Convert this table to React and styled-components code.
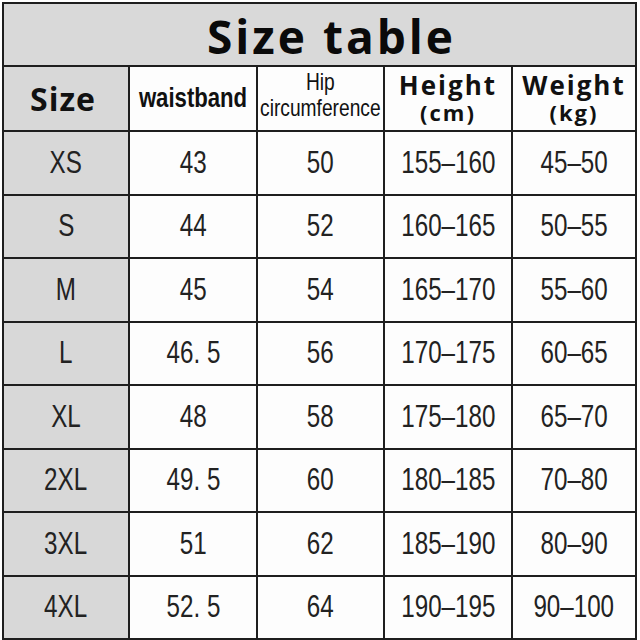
import React from "react";
import styled, { createGlobalStyle } from "styled-components";

const GlobalStyle = createGlobalStyle`
  body {
    margin: 0;
    background: #ffffff;
    font-family: "Liberation Sans", Arial, sans-serif;
  }
`;

const rows = [
  ["XS", "43", "50", "155-160", "45-50"],
  ["S", "44", "52", "160-165", "50-55"],
  ["M", "45", "54", "165-170", "55-60"],
  ["L", "46. 5", "56", "170-175", "60-65"],
  ["XL", "48", "58", "175-180", "65-70"],
  ["2XL", "49. 5", "60", "180-185", "70-80"],
  ["3XL", "51", "62", "185-190", "80-90"],
  ["4XL", "52. 5", "64", "190-195", "90-100"],
];

function App() {
  return (
    <Page>
      <GlobalStyle />
      <Table>
        <Title>Size table</Title>
        <Cell $gray>
          <BigHead>Size</BigHead>
        </Cell>
        <Cell>
          <NarrowHead>waistband</NarrowHead>
        </Cell>
        <Cell>
          <HipHead>
            <span>Hip</span>
            <span>circumference</span>
          </HipHead>
        </Cell>
        <Cell>
          <WideHead>
            <span>Height</span>
            <small>(cm)</small>
          </WideHead>
        </Cell>
        <Cell>
          <WideHead>
            <span>Weight</span>
            <small>(kg)</small>
          </WideHead>
        </Cell>
        {rows.map((row) =>
          row.map((value, i) => (
            <Cell key={row[0] + i} $gray={i === 0}>
              <Value>{value.replace("-", "\u2013")}</Value>
            </Cell>
          ))
        )}
      </Table>
    </Page>
  );
}

const Page = styled.div`
  width: 640px;
  height: 640px;
  padding: 2px 3px 0 2px;
  box-sizing: border-box;
  background: #fff;
`;

const Table = styled.div`
  display: grid;
  grid-template-columns: 126px 128px 127px 128px 124px;
  grid-template-rows: 63px 65px repeat(8, 63.5px);
  border-left: 2px solid #1e1e1e;
  border-top: 2px solid #1e1e1e;
  background: #fff;
`;

const Title = styled.div`
  grid-column: 1 / -1;
  display: flex;
  align-items: center;
  justify-content: center;
  background: #d9d9d9;
  border-right: 2px solid #1e1e1e;
  border-bottom: 2px solid #1e1e1e;
  font-family: "Open Sans", "Noto Sans", sans-serif;
  font-weight: 700;
  font-size: 46px;
  letter-spacing: 3px;
  color: #0a0a0a;
  padding: 2px 0 0 24px;
`;

const Cell = styled.div`
  display: flex;
  align-items: center;
  justify-content: center;
  background: ${(p) => (p.$gray ? "#d8d8d8" : "#fdfdfd")};
  border-right: 2px solid #1e1e1e;
  border-bottom: 2px solid #1e1e1e;
  overflow: hidden;
`;

const BigHead = styled.span`
  font-family: "Open Sans", "Noto Sans", sans-serif;
  font-weight: 700;
  font-size: 32px;
  color: #111;
  letter-spacing: 1px;
  margin-right: 6px;
`;

const NarrowHead = styled.span`
  display: inline-block;
  font-family: "Liberation Sans", Arial, sans-serif;
  font-weight: 700;
  font-size: 27px;
  color: #111;
  white-space: nowrap;
  transform: scaleX(0.82);
`;

const HipHead = styled.div`
  display: flex;
  flex-direction: column;
  align-items: center;
  font-family: "Liberation Sans", Arial, sans-serif;
  font-size: 24px;
  line-height: 26px;
  color: #111;
  margin-top: -8px;
  white-space: nowrap;
  transform: scaleX(0.8);
`;

const WideHead = styled.div`
  display: flex;
  flex-direction: column;
  align-items: center;
  font-family: "Open Sans", "Noto Sans", sans-serif;
  font-weight: 700;
  color: #111;
  letter-spacing: 2px;
  margin-top: -2px;

  span {
    font-size: 26px;
    line-height: 29px;
  }

  small {
    font-size: 22px;
    line-height: 25px;
  }
`;

const Value = styled.span`
  display: inline-block;
  font-family: "Liberation Sans", Arial, sans-serif;
  font-size: 31px;
  color: #222;
  white-space: nowrap;
  transform: scaleX(0.78);
`;

export default App;
